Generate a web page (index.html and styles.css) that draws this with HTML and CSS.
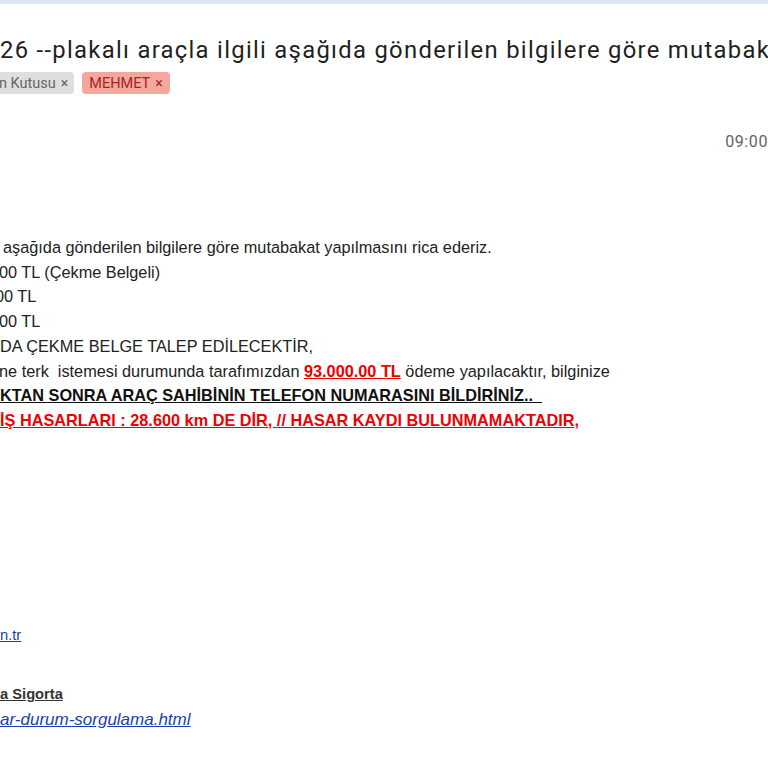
FILE: index.html
```html
<!DOCTYPE html>
<html lang="tr">
<head>
<meta charset="utf-8">
<title>Mail</title>
<link rel="stylesheet" href="styles.css">
</head>
<body>
<div class="topbar"></div>
<div class="header">
  <h1 class="subject">26 --plakalı araçla ilgili aşağıda gönderilen bilgilere göre mutabakat yapılmasını rica ederiz</h1>
  <div class="chips">
    <span class="chip chip-gray">n Kutusu <span class="x">×</span></span>
    <span class="chip chip-red">MEHMET <span class="x">×</span></span>
  </div>
</div>
<div class="meta">
  <span class="time">09:00</span>
</div>
<div class="body">
  <div class="line l1">aşağıda gönderilen bilgilere göre mutabakat yapılmasını rica ederiz.</div>
  <div class="line l2">00 TL (Çekme Belgeli)</div>
  <div class="line l3">00 TL</div>
  <div class="line l2">00 TL</div>
  <div class="line">DA ÇEKME BELGE TALEP EDİLECEKTİR,</div>
  <div class="line l6">ne terk&nbsp; istemesi durumunda tarafımızdan <span class="red-b">93.000.00 TL</span> ödeme yapılacaktır, bilginize</div>
  <div class="line l7"><span class="bold-u">KTAN SONRA ARAÇ SAHİBİNİN TELEFON NUMARASINI BİLDİRİNİZ..&nbsp;&nbsp;</span></div>
  <div class="line"><span class="red-b">İŞ HASARLARI : 28.600 km DE DİR, // HASAR KAYDI BULUNMAMAKTADIR</span><span class="red-plain">,</span></div>
  <div class="line small l-tr"><a class="link">n.tr</a></div>
  <div class="line small l-sig"><span class="bold-u dark">a Sigorta</span></div>
  <div class="line l-url"><a class="link italic">ar-durum-sorgulama.html</a></div>
</div>
</body>
</html>
```
FILE: styles.css
```css
html, body {
  margin: 0;
  padding: 0;
  background: #ffffff;
}
body {
  width: 768px;
  height: 768px;
  overflow: hidden;
}
.topbar {
  height: 4px;
  background: #dce6f4;
}
.header {
  padding-top: 31px;
}
.subject {
  margin: 0;
  font-family: "Roboto", "Inter", sans-serif;
  font-weight: 400;
  font-size: 23.8px;
  letter-spacing: 1.3px;
  line-height: 30px;
  color: #1f1f1f;
  white-space: nowrap;
  overflow: hidden;
}
.chips {
  display: flex;
  gap: 8px;
  margin-top: 7px;
  margin-left: -7px;
  font-family: "Roboto", sans-serif;
  font-size: 14.5px;
}
.chip {
  display: inline-flex;
  align-items: center;
  height: 22px;
  padding: 0 6px;
  border-radius: 4px;
}
.chip .x {
  margin-left: 5px;
  font-size: 14px;
}
.chip-gray {
  background: #dedede;
  color: #666666;
}
.chip-red {
  background: #f4a79d;
  color: #a8261b;
  padding: 0 7px;
}
.meta {
  display: flex;
  justify-content: flex-end;
  margin-top: 38px;
  font-family: "Roboto", sans-serif;
  font-size: 16px;
  letter-spacing: 0.6px;
  color: #5f6368;
}
.time {
  margin-right: 0;
}
.body {
  margin-top: 84px;
  font-family: "Liberation Sans", Arial, sans-serif;
  font-size: 16.3px;
  line-height: 24.7px;
  color: #222222;
}
.line {
  white-space: nowrap;
}
.l1 { text-indent: 3px; }
.l2 { text-indent: -1px; }
.l3 { text-indent: -5px; }
.l6 { text-indent: -1px; }
.l7 { text-indent: 0px; }
.red-b {
  color: #ee0000;
  font-weight: 700;
  text-decoration: underline;
}
.red-plain {
  color: #ee0000;
  font-weight: 700;
}
.bold-u {
  font-weight: 700;
  text-decoration: underline;
  color: #111111;
}
.dark {
  color: #333333;
}
.small {
  font-size: 14.7px;
}
.link {
  color: #1a3fb0;
  text-decoration: underline;
}
.italic {
  font-style: italic;
  font-size: 17px;
}
.l-tr { margin-top: 190px; }
.l-sig { margin-top: 35px; }
.l-url { margin-top: 0px; }
```
